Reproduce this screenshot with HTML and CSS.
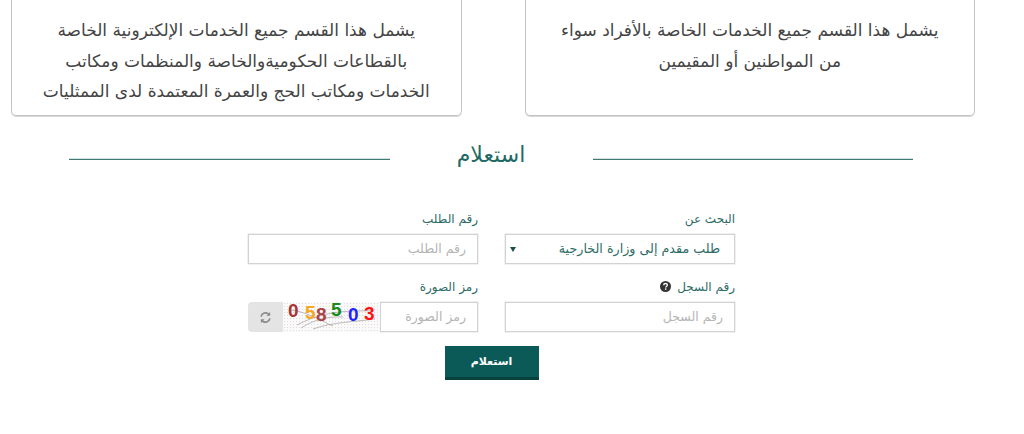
FILE: index.html
```html
<!DOCTYPE html>
<html lang="ar" dir="rtl">
<head>
<meta charset="utf-8">
<title>استعلام</title>
<link rel="stylesheet" href="styles.css">
</head>
<body>
<main class="page">
  <section class="cards">
    <article class="card">يشمل هذا القسم جميع الخدمات الخاصة بالأفراد سواء<br>من المواطنين أو المقيمين</article>
    <article class="card">يشمل هذا القسم جميع الخدمات الإلكترونية الخاصة<br>بالقطاعات الحكوميةوالخاصة والمنظمات ومكاتب<br>الخدمات ومكاتب الحج والعمرة المعتمدة لدى الممثليات</article>
  </section>
  <div class="heading"><span class="rule"></span><h2>استعلام</h2><span class="rule"></span></div>
  <form class="form">
    <div class="field">
      <label>البحث عن</label>
      <div class="select"><span>طلب مقدم إلى وزارة الخارجية</span><i class="caret"></i></div>
    </div>
    <div class="field">
      <label>رقم الطلب</label>
      <div class="input">رقم الطلب</div>
    </div>
    <div class="field">
      <label>رقم السجل
        <svg class="help" viewBox="0 0 10 10"><circle cx="5" cy="5" r="5" fill="#333"/><path d="M3.300 3.900C3.400 2.800 4.100 2.300 5 2.300c1 0 1.700.6 1.700 1.400 0 1.300-1.500 1.200-1.500 2.300" fill="none" stroke="#fff" stroke-width="1.200"/><rect x="4.500" y="6.700" width="1.300" height="1.300" fill="#fff"/></svg>
      </label>
      <div class="input">رقم السجل</div>
    </div>
    <div class="field">
      <label>رمز الصورة</label>
      <div class="captcha">
        <div class="input code">رمز الصورة</div>
        <div class="image" dir="ltr">
          <svg class="noise" viewBox="0 0 97 30"><path d="M14 23C35 12 55 8 90 9M30 27C50 20 70 20 92 17M8 8C25 10 40 20 50 24M18 26C30 18 45 14 60 15" fill="none" stroke="#aaa" stroke-width=".8"/></svg>
          <b class="d1">0</b><b class="d2">5</b><b class="d3">8</b><b class="d4">5</b><b class="d5">0</b><b class="d6">3</b>
        </div>
        <div class="refresh">
          <svg viewBox="0 0 14 14" class="sync"><path d="M2.200 6A5 5 0 0 1 10.600 3.400M11.800 8A5 5 0 0 1 3.400 10.600" fill="none" stroke="#888" stroke-width="1.800"/><path d="M12 1v4H8zM2 13V9h4z" fill="#888"/></svg>
        </div>
      </div>
    </div>
    <button type="button" class="submit">استعلام</button>
  </form>
</main>
</body>
</html>
```
FILE: styles.css
```css
* { box-sizing: border-box; }
html, body { margin: 0; height: 100%; overflow: hidden; background: #fff; }
body { font-family: "DejaVu Sans", "Noto Sans", sans-serif; color: #333; }
.page { width: 1024px; }
.cards {
  display: flex;
  gap: 63px;
  margin-top: -40px;
  padding: 0 49px 0 11px;
}
.card {
  width: 451px;
  height: 156px;
  padding-top: 54px;
  border: 1px solid #c4c4c4;
  border-radius: 5px;
  box-shadow: 0 1px 0 #d8d8d8;
  font-size: 17px;
  line-height: 30.500px;
  text-align: center;
  color: #444;
}
.heading {
  display: flex;
  align-items: center;
  justify-content: center;
  height: 40px;
  margin-top: 20px;
  padding: 0 111px 0 69px;
}
.heading h2 {
  width: 203px;
  margin: 0 0 2px;
  font-size: 22px;
  font-weight: 400;
  line-height: 36px;
  text-align: center;
  color: #1f6a66;
}
.rule { flex: 1; height: 1px; margin-top: 7px; background: #3f7a74; box-shadow: 0 -1px 0 #d5e0df; }
.form {
  display: grid;
  grid-template-columns: 230px 230px;
  column-gap: 27px;
  row-gap: 14px;
  justify-content: start;
  margin: 34px 289px 0 0;
}
.field label {
  display: block;
  height: 24px;
  font-size: 12px;
  line-height: 19px;
  color: #2c6a66;
}
.help { width: 11px; height: 11px; vertical-align: -1px; margin-right: 2px; }
.input, .select {
  height: 30px;
  border: 1px solid #d2d2d2;
  box-shadow: 0 0 0 .5px #e4e4e4;
  background: #fff;
  font-size: 12.500px;
  line-height: 28px;
}
.input { padding: 0 11px; color: #b5b5b5; }
.select {
  display: flex;
  justify-content: space-between;
  align-items: center;
  padding: 0 14px 0 4px;
  font-size: 12.700px;
  color: #2f6b66;
}
.caret {
  width: 0;
  height: 0;
  border-top: 5px solid #1b4f4b;
  border-left: 3px solid transparent;
  border-right: 3px solid transparent;
}
.captcha { display: flex; height: 30px; }
.code { width: 98px; flex: none; }
.image {
  position: relative;
  width: 97px;
  flex: none;
  background: radial-gradient(#e4dcdc 0.500px, #fafafa 1px) 0 0 / 3px 3px;
}
.noise { position: absolute; inset: 0; width: 97px; height: 30px; }
.image b {
  position: absolute;
  font-family: "Liberation Sans", sans-serif;
  font-size: 19px;
  line-height: 16px;
  font-weight: 700;
}
.d1 { left: 5px; top: 1px; color: #a33; }
.d2 { left: 22px; top: 3px; color: #f5a623; }
.d3 { left: 33px; top: 5px; color: #a44; font-size: 18px; }
.d4 { left: 48px; top: 0; color: #1a8a1a; font-size: 20px; }
.d5 { left: 65px; top: 5px; color: #22f; }
.d6 { left: 81px; top: 4px; color: #f11; font-size: 22px; }
.refresh {
  flex: 1;
  display: flex;
  align-items: center;
  justify-content: center;
  background: #e4e4e4;
  border-radius: 4px 0 0 4px;
}
.sync { width: 13px; height: 13px; }
.submit {
  grid-column: 1 / -1;
  justify-self: center;
  width: 94px;
  height: 34px;
  border: 0;
  border-bottom: 3px solid #07423f;
  background: #0b5a57;
  color: #fff;
  font-family: inherit;
  font-size: 11px;
  font-weight: 700;
}
```
